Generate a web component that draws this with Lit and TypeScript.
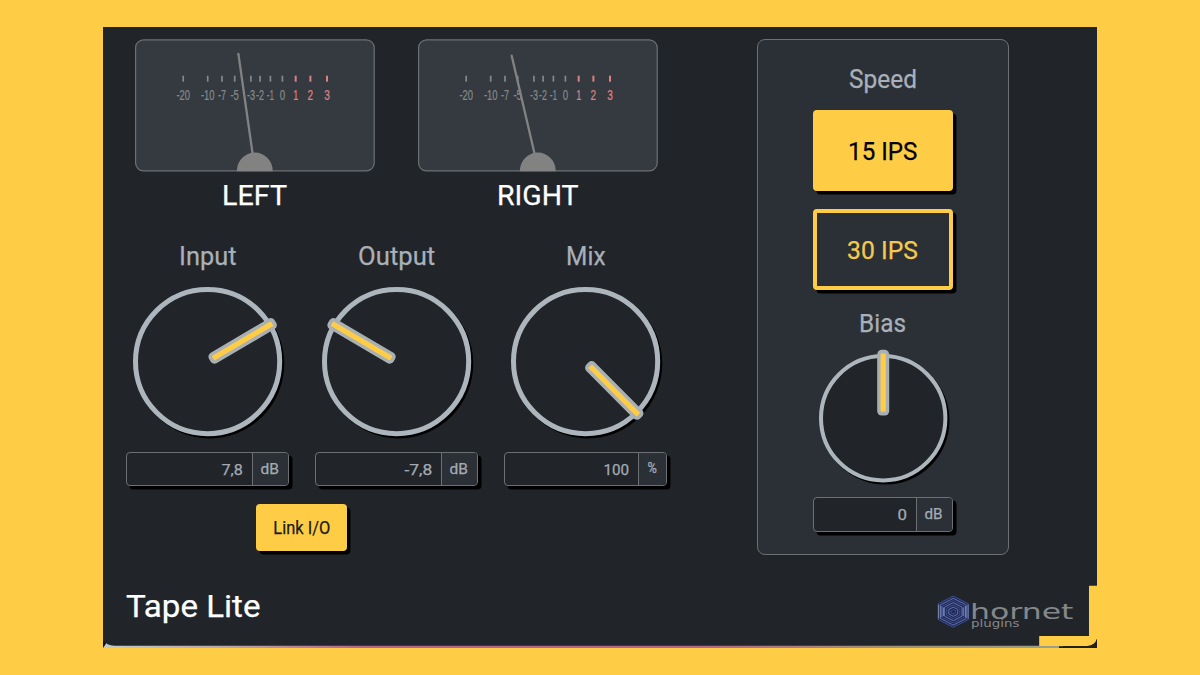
import { LitElement, html, svg, css } from "lit";
import { customElement, property } from "lit/decorators.js";

const CAP = 0.711;

/** A line of text whose box is exactly its cap height, fitted to a width. */
@customElement("fit-text")
class FitText extends LitElement {
  @property() text = "";
  @property({ type: Number }) w = 50;
  @property({ type: Number }) cap = 18.6;

  static styles = css`
    :host { display: block; line-height: 0; }
    svg { display: block; overflow: visible; }
    text { fill: currentColor; stroke: currentColor; stroke-width: 0.25px;
      font-family: Roboto, "Liberation Sans", sans-serif; white-space: pre; }
  `;

  render() {
    const size = this.cap / CAP;
    return html`<svg width=${this.w} height=${this.cap}>
      <text x=${-size * 0.035} y=${this.cap} font-size=${size}
        textLength=${this.w + size * 0.07} lengthAdjust="spacingAndGlyphs">${this.text}</text>
    </svg>`;
  }
}

const MARKS: [string, number, number][] = [
  ["-20", 48.2, 13.6], ["-10", 72.7, 13.6], ["-7", 87, 8], ["-5", 99.7, 8.5],
  ["-3", 115.9, 8], ["-2", 125.1, 8], ["-1", 135.4, 7.3], ["0", 147.4, 5.4],
  ["1", 160.7, 5], ["2", 175.4, 5.6], ["3", 192, 5.6],
];

@customElement("vu-meter")
class VuMeter extends LitElement {
  @property() label = "";
  @property({ type: Number }) labelWidth = 64;
  @property({ type: Number }) tipX = 103.4;
  @property({ type: Number }) tipY = 14;

  static styles = css`
    :host { display: flex; flex-direction: column; align-items: center; gap: 13.6px; width: 239.6px; color: #fff; }
    .face { display: block; width: 239.6px; height: 132.3px; overflow: visible; }
    .card { fill: #343a40; stroke: #6d7073; stroke-width: 1.2; }
    .num { font-family: "Liberation Sans", Arial, sans-serif; font-size: 14.4px; fill: #85888a;
      stroke: #85888a; stroke-width: 0.25px; }
    .tick { stroke: #85888a; stroke-width: 1.7; }
    .num.hot { fill: #dc8084; stroke: #dc8084; }
    .tick.hot { stroke: #dc8084; stroke-width: 2; }
    .needle { stroke: #828282; stroke-width: 2.3; stroke-linecap: round; }
    .hub { fill: #828282; }
  `;

  render() {
    return html`
      <svg class="face" viewBox="0 0 239.6 132.3">
        <rect class="card" x=".6" y=".8" width="238.6" height="131.1" rx="8" />
        ${MARKS.map(([t, x, w], i) => svg`
          <line class="tick ${i > 7 ? "hot" : ""}" x1=${x} x2=${x} y1="36.7" y2="42.7" />
          <text class="num ${i > 7 ? "hot" : ""}" x=${x - w / 2} y="61.4"
            textLength=${w} lengthAdjust="spacingAndGlyphs">${t}</text>`)}
        <line class="needle" x1=${this.tipX} y1=${this.tipY + 0.9} x2="119.2" y2="126" />
        <path class="hub" d="M101.8 132.2a18 18.6 0 0 1 36 0z" />
      </svg>
      <fit-text .text=${this.label} .w=${this.labelWidth} .cap=${20}></fit-text>
    `;
  }
}

@customElement("rotary-knob")
class RotaryKnob extends LitElement {
  @property({ type: Number }) radius = 74.6;
  @property({ type: Number }) ring = 5;
  @property({ type: Number }) angle = 0;

  static styles = css`
    :host { display: block; }
    svg { display: block; overflow: visible; }
    .shadow { fill: #000; }
    .ring { fill: #212529; stroke: #adb5bd; }
    .grip { fill: #a9b0b4; }
    .line { fill: #ffcd45; }
  `;

  render() {
    const r = this.radius;
    return html`<svg width=${r * 2} height=${r * 2} viewBox="${-r} ${-r} ${r * 2} ${r * 2}">
      <circle class="shadow" cx="2.1" cy="2.2" r=${r} />
      <circle class="ring" r=${r - this.ring / 2} stroke-width=${this.ring} />
      <g transform="rotate(${this.angle})">
        <rect class="grip" x="-6" y=${-r - 4.2} width="12" height=${r + 1.6} rx="4.6" />
        <rect class="line" x="-2.6" y=${-r - 0.4} width="5.2" height=${r - 6} rx="1" />
      </g>
    </svg>`;
  }
}

@customElement("value-field")
class ValueField extends LitElement {
  @property() value = "";
  @property() unit = "";
  @property({ type: Number }) valueWidth = 20;
  @property({ type: Number }) unitWidth = 17.3;
  @property({ type: Number }) unitBox = 36;

  static styles = css`
    :host { display: flex; box-sizing: border-box; height: 34.6px; border: 1.3px solid #6d7073;
      border-radius: 4px; background: #212529; box-shadow: 3.5px 3.6px 0 #000; color: #a4abb3; overflow: hidden; }
    .value { flex: 1; display: flex; justify-content: flex-end; align-items: center; padding: 1px 9.4px 0 0; }
    .unit { box-sizing: border-box; display: flex; justify-content: center; align-items: center;
      background: #2b3037; border-left: 1.3px solid #6d7073; padding: 0 1px 1px 0; }
  `;

  render() {
    return html`
      <div class="value"><fit-text .text=${this.value} .w=${this.valueWidth} .cap=${11}></fit-text></div>
      <div class="unit" style="width:${this.unitBox}px">
        <fit-text .text=${this.unit} .w=${this.unitWidth} .cap=${this.unit === "%" ? 10 : 11}></fit-text>
      </div>`;
  }
}

const KNOBS = [
  { label: "Input", w: 55.6, angle: 59.5, value: "7,8", vw: 20.3, unit: "dB", uw: 17.3, box: 36 },
  { label: "Output", w: 75.3, angle: -59.5, value: "-7,8", vw: 26.7, unit: "dB", uw: 17.3, box: 36.6 },
  { label: "Mix", w: 37.6, angle: 135.2, value: "100", vw: 24.6, unit: "%", uw: 8.4, box: 28 },
];

function hexagon(r: number, sx = 1) {
  return [0, 1, 2, 3, 4, 5]
    .map((i) => {
      const a = (Math.PI / 3) * i - Math.PI / 2;
      return `${(17.3 + Math.cos(a) * r * sx * 1.12).toFixed(2)},${(17.7 + Math.sin(a) * r).toFixed(2)}`;
    })
    .join(" ");
}

@customElement("app-root")
class AppRoot extends LitElement {
  static styles = css`
    :host { display: block; box-sizing: border-box; width: 1200px; height: 675px; padding: 26.6px 103px 0 102.6px;
      background: #ffcd45; overflow: hidden; }
    .panel { position: relative; width: 994.4px; height: 621.2px; background: #212529; color: #a9b0b9; }
    .main { display: flex; height: 528px; }
    .controls { width: 654.2px; box-sizing: border-box; padding-top: 12.7px; }
    .meters { display: flex; gap: 43.9px; padding-left: 32.2px; }
    .knobs { display: flex; gap: 26.2px; padding: 41.2px 0 0 23.4px; }
    .knob { display: flex; flex-direction: column; align-items: center; width: 163px; }
    .knob rotary-knob { margin: 21.6px 0 15.8px; }
    .knob value-field { width: 100%; }
    .btn { display: flex; align-items: center; justify-content: center; box-sizing: border-box;
      border-radius: 4px; background: #ffcd45; color: #000; box-shadow: 3.4px 3.4px 0 #000; }
    .link { width: 91px; height: 47.4px; margin: 17.4px 0 0 153.9px; color: #1c1a12; }
    .group { display: flex; flex-direction: column; align-items: center; box-sizing: border-box; width: 252.4px;
      height: 515.4px; margin-top: 12.7px; padding-top: 28.4px; border: 1.3px solid #6d7073; border-radius: 8px;
      background: #2b3037; }
    .speed { width: 140.6px; height: 81.4px; padding-top: 1px; }
    .speed.first { margin: 22.6px 0 17.6px; }
    .speed.off { background: #2b3037; border: 4px solid #ffcd45; color: #f5c94f; }
    .bias { margin-top: 24px; }
    .group rotary-knob { margin: 21.2px 0 14.8px; }
    .group value-field { width: 140.6px; }
    .footer { display: flex; justify-content: space-between; padding: 40.4px 23px 0 24.6px; }
    .title { color: #fff; }
    .logo { width: 138px; height: 38px; margin-top: -1px; overflow: visible; }
    .hex { fill: none; stroke-width: 1; }
    .word { font-family: "DejaVu Sans", sans-serif; fill: #85888a; }
    .trim { position: absolute; left: 0; bottom: 0; display: block; pointer-events: none; }
  `;

  render() {
    return html`
      <div class="panel">
        <div class="main">
          <div class="controls">
            <div class="meters">
              <vu-meter label="LEFT" .labelWidth=${63} .tipX=${103.4} .tipY=${14}></vu-meter>
              <vu-meter label="RIGHT" .labelWidth=${79.6} .tipX=${93.7} .tipY=${15.8}></vu-meter>
            </div>
            <div class="knobs">
              ${KNOBS.map((k) => html`
                <div class="knob">
                  <fit-text .text=${k.label} .w=${k.w} .cap=${18.6}></fit-text>
                  <rotary-knob .angle=${k.angle}></rotary-knob>
                  <value-field .value=${k.value} .valueWidth=${k.vw} .unit=${k.unit}
                    .unitWidth=${k.uw} .unitBox=${k.box}></value-field>
                </div>`)}
            </div>
            <div class="btn link"><fit-text text="Link I/O" .w=${55.6} .cap=${12.8}></fit-text></div>
          </div>
          <div class="group">
            <fit-text text="Speed" .w=${66} .cap=${18.6}></fit-text>
            <div class="btn speed first"><fit-text text="15 IPS" .w=${67.5} .cap=${18.3}></fit-text></div>
            <div class="btn speed off"><fit-text text="30 IPS" .w=${69} .cap=${18.3}></fit-text></div>
            <fit-text class="bias" text="Bias" .w=${45} .cap=${18.4}></fit-text>
            <rotary-knob .radius=${64.2} .ring=${4} .angle=${0}></rotary-knob>
            <value-field value="0" .valueWidth=${8.4} unit="dB" .unitWidth=${17} .unitBox=${36.6}></value-field>
          </div>
        </div>
        <div class="footer">
          <fit-text class="title" text="Tape Lite" .w=${132.4} .cap=${22}></fit-text>
          <svg class="logo" viewBox="0 0 138 38">
            <polygon points=${hexagon(16.4)} fill="#1f295a" />
            ${[15.6, 13.4, 11.2, 9, 6.8, 4.6, 2.2].map((r, i) => svg`
              <polygon class="hex" points=${hexagon(r)} stroke=${i % 2 ? "#6473a0" : "#3a4b8c"} />`)}
            <path d="M2.6 10.6v14M5 12v11.4M7.4 13.4v8.6M27.2 13.4v8.6M29.6 12v11.4M32 10.6v14" stroke="#7b88a8" />
            <text class="word" x="34" y="25.3" font-size="20.4" textLength="103.4" lengthAdjust="spacingAndGlyphs">hornet</text>
            <text class="word" x="35" y="33.2" font-size="11" textLength="48.4" lengthAdjust="spacingAndGlyphs">plugins</text>
          </svg>
        </div>
        <svg class="trim" width="994.4" height="63" viewBox="0 0 994.4 63">
          <defs>
            <linearGradient id="edge">
              <stop offset="0" stop-color="#c3cbc9" />
              <stop offset=".12" stop-color="#b9a9ae" />
              <stop offset=".27" stop-color="#b5678f" />
              <stop offset=".62" stop-color="#b5678f" />
              <stop offset=".8" stop-color="#a39079" />
              <stop offset="1" stop-color="#9aa08c" />
            </linearGradient>
          </defs>
          <path d="M0 63V57L3 58Q6 60.6 12 60.8H960V63z" fill="url(#edge)" />
          <path d="M0 63V56l3.4 2z" fill="#0c0d0e" />
          <path d="M986 0.8h8.4V52Q993 60.6 984 61H936.2V51H986z" fill="#ffcd45" />
          <path d="M956 61.2H984Q993 60.6 994.4 52.4V63H956z" fill="#211f18" />
        </svg>
      </div>
    `;
  }
}
